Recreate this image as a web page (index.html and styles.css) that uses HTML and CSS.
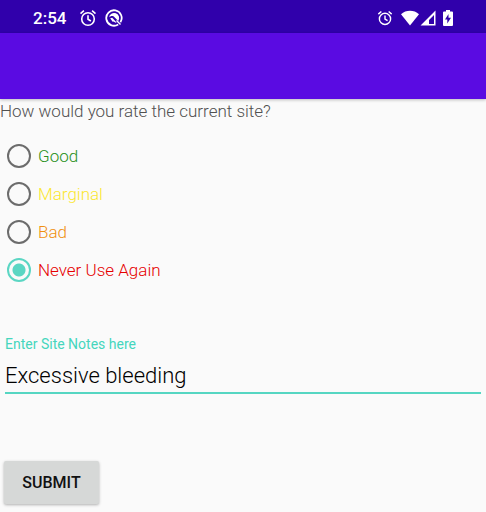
FILE: index.html
```html
<!DOCTYPE html>
<html lang="en">
<head>
    <meta charset="UTF-8">
    <meta name="viewport" content="width=device-width, initial-scale=1.0">
    <title>Site Rating</title>
    <link rel="stylesheet" href="styles.css">
</head>
<body>
    <div class="status-bar">
        <div class="status-left">
            <span class="clock">2:54</span>
            <svg class="icon" viewBox="0 0 18 18">
                <circle cx="9" cy="10" r="6.3" fill="none" stroke="currentColor" stroke-width="1.6"/>
                <path d="M9 6.2v4l2.9 1.8M1.5 4.6l3.4-2.9M16.5 4.6l-3.4-2.9" fill="none" stroke="currentColor" stroke-width="1.6"/>
            </svg>
            <svg class="icon" viewBox="0 0 18 18">
                <path d="M13.2 15.4A7.7 7.7 0 1 1 15.4 13.2" fill="none" stroke="currentColor" stroke-width="1.8"/>
                <path d="M4 8.4A5.1 5.1 0 1 1 13.2 12L8.8 7.4C7 6.4 5.2 7 4 8.4z" fill="currentColor"/>
                <path d="M5.2 9.2L7.2 8.8L11.6 13.4L10.8 13.8L8.4 12.4L7.6 12.8z" fill="currentColor"/>
                <path d="M11.5 11.5l4 4" stroke="currentColor" stroke-width="1.4"/>
            </svg>
        </div>
        <div class="status-right">
            <svg class="icon-alarm" viewBox="0 0 18 18">
                <circle cx="9" cy="10" r="6.3" fill="none" stroke="currentColor" stroke-width="1.6"/>
                <path d="M9 6.2v4l2.9 1.8M1.5 4.6l3.4-2.9M16.5 4.6l-3.4-2.9" fill="none" stroke="currentColor" stroke-width="1.6"/>
            </svg>
            <svg class="icon-wifi" viewBox="0 0 18 16">
                <path d="M0 4.2C5-.4 13-.4 18 4.2L9 15.5z" fill="currentColor"/>
            </svg>
            <svg class="icon-signal" viewBox="0 0 16 16">
                <path d="M15.5.5v15H.5zM14 5L9 10v4h5z" fill="currentColor" fill-rule="evenodd"/>
            </svg>
            <svg class="icon-battery" viewBox="0 0 10 16">
                <path d="M3 0h4v1.5h2q1 0 1 1v12.5q0 1-1 1H1q-1 0-1-1v-12.5q0-1 1-1h2zM5.5 4L2 9.5h2.3V13.5L8 7.7H5.5z" fill="currentColor" fill-rule="evenodd"/>
            </svg>
        </div>
    </div>
    <header class="app-bar"></header>
    <main>
        <form class="site-form">
            <fieldset class="rating">
                <legend>How would you rate the current site?</legend>
                <label class="good"><input type="radio" name="rating" value="good">Good</label>
                <label class="marginal"><input type="radio" name="rating" value="marginal">Marginal</label>
                <label class="bad"><input type="radio" name="rating" value="bad">Bad</label>
                <label class="never"><input type="radio" name="rating" value="never" checked>Never Use Again</label>
            </fieldset>
            <div class="notes">
                <label for="site-notes">Enter Site Notes here</label>
                <input type="text" id="site-notes" value="Excessive bleeding">
            </div>
            <button type="submit">SUBMIT</button>
        </form>
    </main>
</body>
</html>
```

FILE: styles.css
```css
body {
    font-family: Roboto, "Liberation Sans", sans-serif;
    font-weight: 300;
    margin: 0;
    background-color: #fafafa;
}

.status-bar {
    display: flex;
    justify-content: space-between;
    align-items: center;
    height: 33px;
    padding: 0 33px;
    box-sizing: border-box;
    background-color: #3000ab;
    color: #fff;
}

.status-left,
.status-right {
    display: flex;
    align-items: center;
    padding-top: 2px;
}

.clock {
    width: 46px;
    font-size: 17px;
    font-weight: 500;
    line-height: 20px;
}

.icon {
    width: 18px;
    height: 18px;
    margin-right: 8px;
}

.icon-alarm {
    width: 16px;
    height: 16px;
    margin-right: 8px;
}

.icon-wifi {
    width: 18px;
    height: 16px;
    margin-right: 1px;
}

.icon-signal {
    width: 16px;
    height: 16px;
    margin-right: 7px;
}

.icon-battery {
    width: 10px;
    height: 16px;
}

.app-bar {
    height: 66px;
    background-color: #5a0be2;
    box-shadow: 0 1px 3px rgba(0, 0, 0, 0.25);
}

.rating {
    margin: 0;
    padding: 0;
    border: none;
}

.rating legend {
    padding: 1px 0 15px;
    color: #505050;
    font-size: 17px;
    line-height: 22px;
}

.rating label {
    display: flex;
    align-items: center;
    gap: 7px;
    height: 38px;
    padding-left: 7px;
    font-size: 17px;
}

.rating input {
    appearance: none;
    width: 24px;
    height: 24px;
    margin: 0;
    border: 2px solid #6c6c6c;
    border-radius: 50%;
}

.rating input:checked {
    border-color: #5bd6c3;
    background: radial-gradient(circle, #5bd6c3 6px, transparent 7px);
}

.good {
    color: #279020;
}

.marginal {
    color: #fbe730;
}

.bad {
    color: #f09010;
}

.never {
    color: #e60000;
}

.notes {
    padding: 46px 5px 0;
}

.notes label {
    display: block;
    color: #45d6bd;
    font-size: 14px;
    font-weight: 400;
    line-height: 18px;
}

.notes input {
    width: 100%;
    height: 41px;
    padding: 6px 0 0;
    box-sizing: border-box;
    border: none;
    border-bottom: 2px solid #55d6c2;
    outline: none;
    background: none;
    color: #000;
    font-family: inherit;
    font-size: 22px;
    font-weight: inherit;
}

button {
    display: block;
    width: 95px;
    height: 43px;
    margin: 67px 0 8px 4px;
    padding: 0;
    border: none;
    border-radius: 2px;
    background-color: #d6d8d7;
    box-shadow: 0 1px 3px rgba(0, 0, 0, 0.3);
    color: #111;
    font-family: inherit;
    font-size: 16px;
    font-weight: 500;
    cursor: pointer;
}
```
